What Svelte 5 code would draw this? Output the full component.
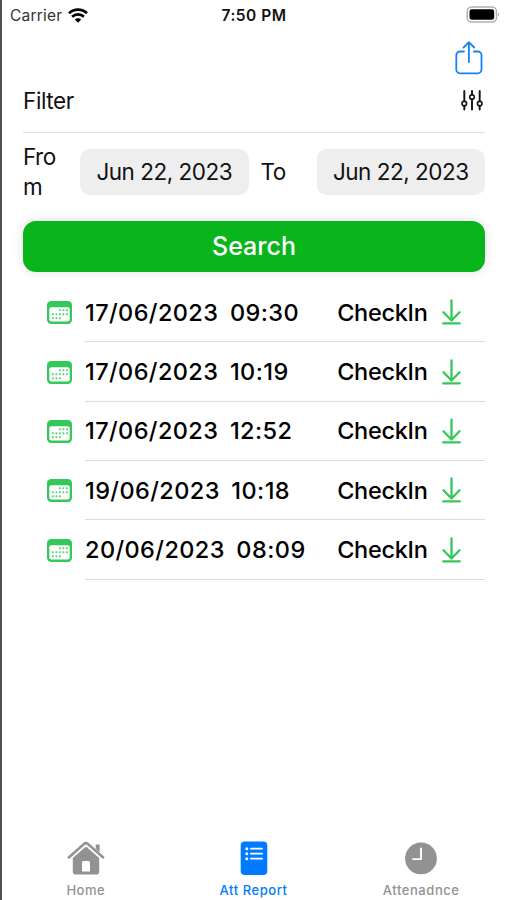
<script>
  const records = [
    { date: '17/06/2023', time: '09:30' },
    { date: '17/06/2023', time: '10:19' },
    { date: '17/06/2023', time: '12:52' },
    { date: '19/06/2023', time: '10:18' },
    { date: '20/06/2023', time: '08:09' }
  ];
  const dots = [
    [13.5, 9], [17, 9], [20.5, 9],
    [6.5, 13], [10, 13], [13.5, 13], [17, 13], [20.5, 13],
    [6.5, 17], [10, 17], [13.5, 17]
  ];
</script>

<div class="screen">
  <header class="status">
    <div class="carrier">
      <span>Carrier</span>
      <svg width="20" height="15" viewBox="0 0 20 15">
        <g fill="none" stroke="#000" stroke-width="2.6">
          <path d="M1 5.2 C6 .4 14 .4 19 5.2" />
          <path d="M4.1 8.8 C7.4 5.6 12.6 5.6 15.9 8.8" />
        </g>
        <path d="M6.8 11.5 C8.5 9.9 11.5 9.9 13.2 11.5 L10 14.7 Z" fill="#000" />
      </svg>
    </div>
    <div class="clock">7:50 PM</div>
    <svg class="battery" width="34" height="17" viewBox="0 0 34 17">
      <rect x="1.2" y="1" width="29.3" height="15" rx="4.5" fill="#fff" stroke="#b0b0b0" stroke-width="1.5" />
      <rect x="3.5" y="3.3" width="24.7" height="10.4" rx="2.3" fill="#000" />
      <path d="M32 6.4 Q34 8.5 32 10.6 Z" fill="#aaa" />
    </svg>
  </header>

  <nav class="toolbar">
    <svg width="28" height="34" viewBox="0 0 28 34" fill="none" stroke="#1583f5" stroke-width="1.8" stroke-linecap="round" stroke-linejoin="round">
      <path d="M9 10.5H5A3.7 3.7 0 0 0 1.3 14.2V28.6A3.7 3.7 0 0 0 5 32.3H22.8A3.7 3.7 0 0 0 26.5 28.6V14.2A3.7 3.7 0 0 0 22.8 10.5H18.8" />
      <path d="M13.9 21V1.4M8.6 6.5L13.9 1.2L19.2 6.5" />
    </svg>
  </nav>

  <main>
    <div class="filter">
      <span>Filter</span>
      <svg width="22" height="21" viewBox="0 0 22 21" fill="none" stroke="#111" stroke-width="1.9" stroke-linecap="round">
        <path d="M3.3 1V11.2M3.3 15.8V19.5M11 1V4.7M11 9.3V19.5M18.7 1V11.2M18.7 15.8V19.5" />
        <g stroke-width="1.6"><circle cx="3.3" cy="13.5" r="2.3" /><circle cx="11" cy="7" r="2.3" /><circle cx="18.7" cy="13.5" r="2.3" /></g>
      </svg>
    </div>

    <div class="range">
      <span class="from">From</span>
      <div class="date">Jun 22, 2023</div>
      <span class="to">To</span>
      <div class="date">Jun 22, 2023</div>
    </div>

    <button class="search">Search</button>

    <ul>
      {#each records as r}
        <li>
          <svg class="cal" width="25" height="23" viewBox="0 0 25 23">
            <rect width="25" height="23" rx="4.2" fill="#34c759" />
            <rect x="2.3" y="6.2" width="20.4" height="14.4" rx="2" fill="#fff" />
            {#each dots as [x, y]}
              <rect x={x - 1.6} y={y - 0.8} width="2" height="2" rx=".6" fill="#5fd17c" />
            {/each}
          </svg>
          <div class="entry">
            <span class="day">{r.date}</span>
            <span class="time">{r.time}</span>
            <span class="kind">CheckIn</span>
            <svg width="20" height="26" viewBox="0 0 20 26" fill="none" stroke="#36c75a" stroke-width="2.3" stroke-linecap="round" stroke-linejoin="round">
              <path d="M10.5 1.5V21.5M2.5 13.3L10.5 21.5L18.5 13.3M2.2 24.4H18.8" />
            </svg>
          </div>
        </li>
      {/each}
    </ul>
  </main>

  <footer>
    <div class="tab">
      <svg width="38" height="36" viewBox="0 0 38 36">
        <path d="M1.8 17.5L17 4Q19 2.2 21 4L36.2 17.5" fill="none" stroke="#929292" stroke-width="2.5" stroke-linecap="round" />
        <path d="M28.7 4.5H32.6V12.3L28.7 8.8Z" fill="#929292" />
        <path fill-rule="evenodd" d="M5.8 18L17.5 7.7Q19 6.4 20.5 7.7L32.2 18V31.4Q32.2 34.5 29.1 34.5H8.9Q5.8 34.5 5.8 31.4ZM15 22.5V31.5H23V22.5Q23 21 21.5 21H16.5Q15 21 15 22.5Z" fill="#929292" />
      </svg>
      <span>Home</span>
    </div>
    <div class="tab active">
      <svg width="38" height="36" viewBox="0 0 38 36">
        <rect x="5.7" y="1.5" width="26.6" height="33.5" rx="4" fill="#007aff" />
        <g stroke="#fff" stroke-width="1.8" stroke-linecap="round">
          <path d="M16 8.7H27M16 13.7H27M16 18.7H27" />
        </g>
        <g fill="#fff"><circle cx="11.8" cy="8.7" r="1.5" /><circle cx="11.8" cy="13.7" r="1.5" /><circle cx="11.8" cy="18.7" r="1.5" /></g>
      </svg>
      <span>Att Report</span>
    </div>
    <div class="tab">
      <svg width="38" height="36" viewBox="0 0 38 36">
        <circle cx="19" cy="18.4" r="15.9" fill="#929292" />
        <path d="M19 8.5V19.1H11" fill="none" stroke="#fff" stroke-width="1.9" stroke-linecap="round" stroke-linejoin="round" />
      </svg>
      <span>Attenadnce</span>
    </div>
  </footer>
</div>

<style>
  .screen {
    box-sizing: border-box;
    width: 507px;
    height: 900px;
    display: flex;
    flex-direction: column;
    background: #fff;
    border-left: 2px solid #505054;
    font-family: Inter, 'Liberation Sans', sans-serif;
    color: #111;
    overflow: hidden;
  }
  svg { display: block; flex: none; }
  .status {
    height: 30px;
    display: grid;
    grid-template-columns: 1fr auto 1fr;
    align-items: center;
    padding: 0 7px 0 8px;
    font-size: 15.5px;
  }
  .carrier { display: flex; align-items: center; gap: 6px; color: #333; letter-spacing: .2px; }
  .clock { font-weight: 600; letter-spacing: .5px; margin: 0 2px 0 0; }
  .battery { justify-self: end; margin-top: -2px; }
  .toolbar { height: 45px; display: flex; justify-content: flex-end; padding: 11px 24px 0 0; box-sizing: border-box; }
  main { padding: 0 22px 0 21px; flex: 1; }
  .filter {
    box-sizing: border-box;
    height: 57.5px;
    padding: 0 2px 5px 0;
    display: flex;
    align-items: center;
    justify-content: space-between;
    border-bottom: 1.5px solid #dedede;
    font-size: 22.5px;
    letter-spacing: -.4px;
  }
  .range { display: flex; align-items: center; height: 78px; font-size: 22.5px; letter-spacing: -.5px; }
  .from { width: 38px; margin-right: 19px; line-height: 29.5px; word-break: break-all; }
  .date {
    width: 168.5px;
    height: 46px;
    border-radius: 10px;
    background: #eeeeef;
    display: flex;
    align-items: center;
    justify-content: center;
    white-space: nowrap;
  }
  .to { margin-left: 12px; flex: 1; }
  .search {
    display: block;
    width: 100%;
    height: 51px;
    margin-top: 10px;
    border: 0;
    border-radius: 13px;
    background: #08b51b;
    color: #fff;
    font: 500 25px Inter, sans-serif;
    box-shadow: 0 0 12px rgba(0, 0, 0, .12);
  }
  ul { list-style: none; margin: 11.7px 0 0; padding: 0 0 0 24px; }
  li { display: flex; align-items: center; height: 59.3px; gap: 13px; }
  .entry {
    box-sizing: border-box;
    height: 100%;
    flex: 1;
    display: flex;
    align-items: center;
    border-bottom: 1.3px solid #dcdcdc;
    padding-right: 24px;
    font-size: 23.5px;
    font-weight: 450;
    color: #000;
  }
  .day { letter-spacing: .4px; }
  .time { margin-left: 11.5px; flex: 1; letter-spacing: .45px; }
  .kind { margin-right: 13.5px; letter-spacing: -.3px; }
  footer { display: flex; height: 60px; padding-right: 2px; }
  .tab { flex: 1; display: flex; flex-direction: column; align-items: center; color: #929292; font-size: 13px; font-weight: 500; letter-spacing: .55px; }
  .tab span { margin-top: 6px; line-height: 16px; }
  .tab.active { color: #007aff; }
</style>
